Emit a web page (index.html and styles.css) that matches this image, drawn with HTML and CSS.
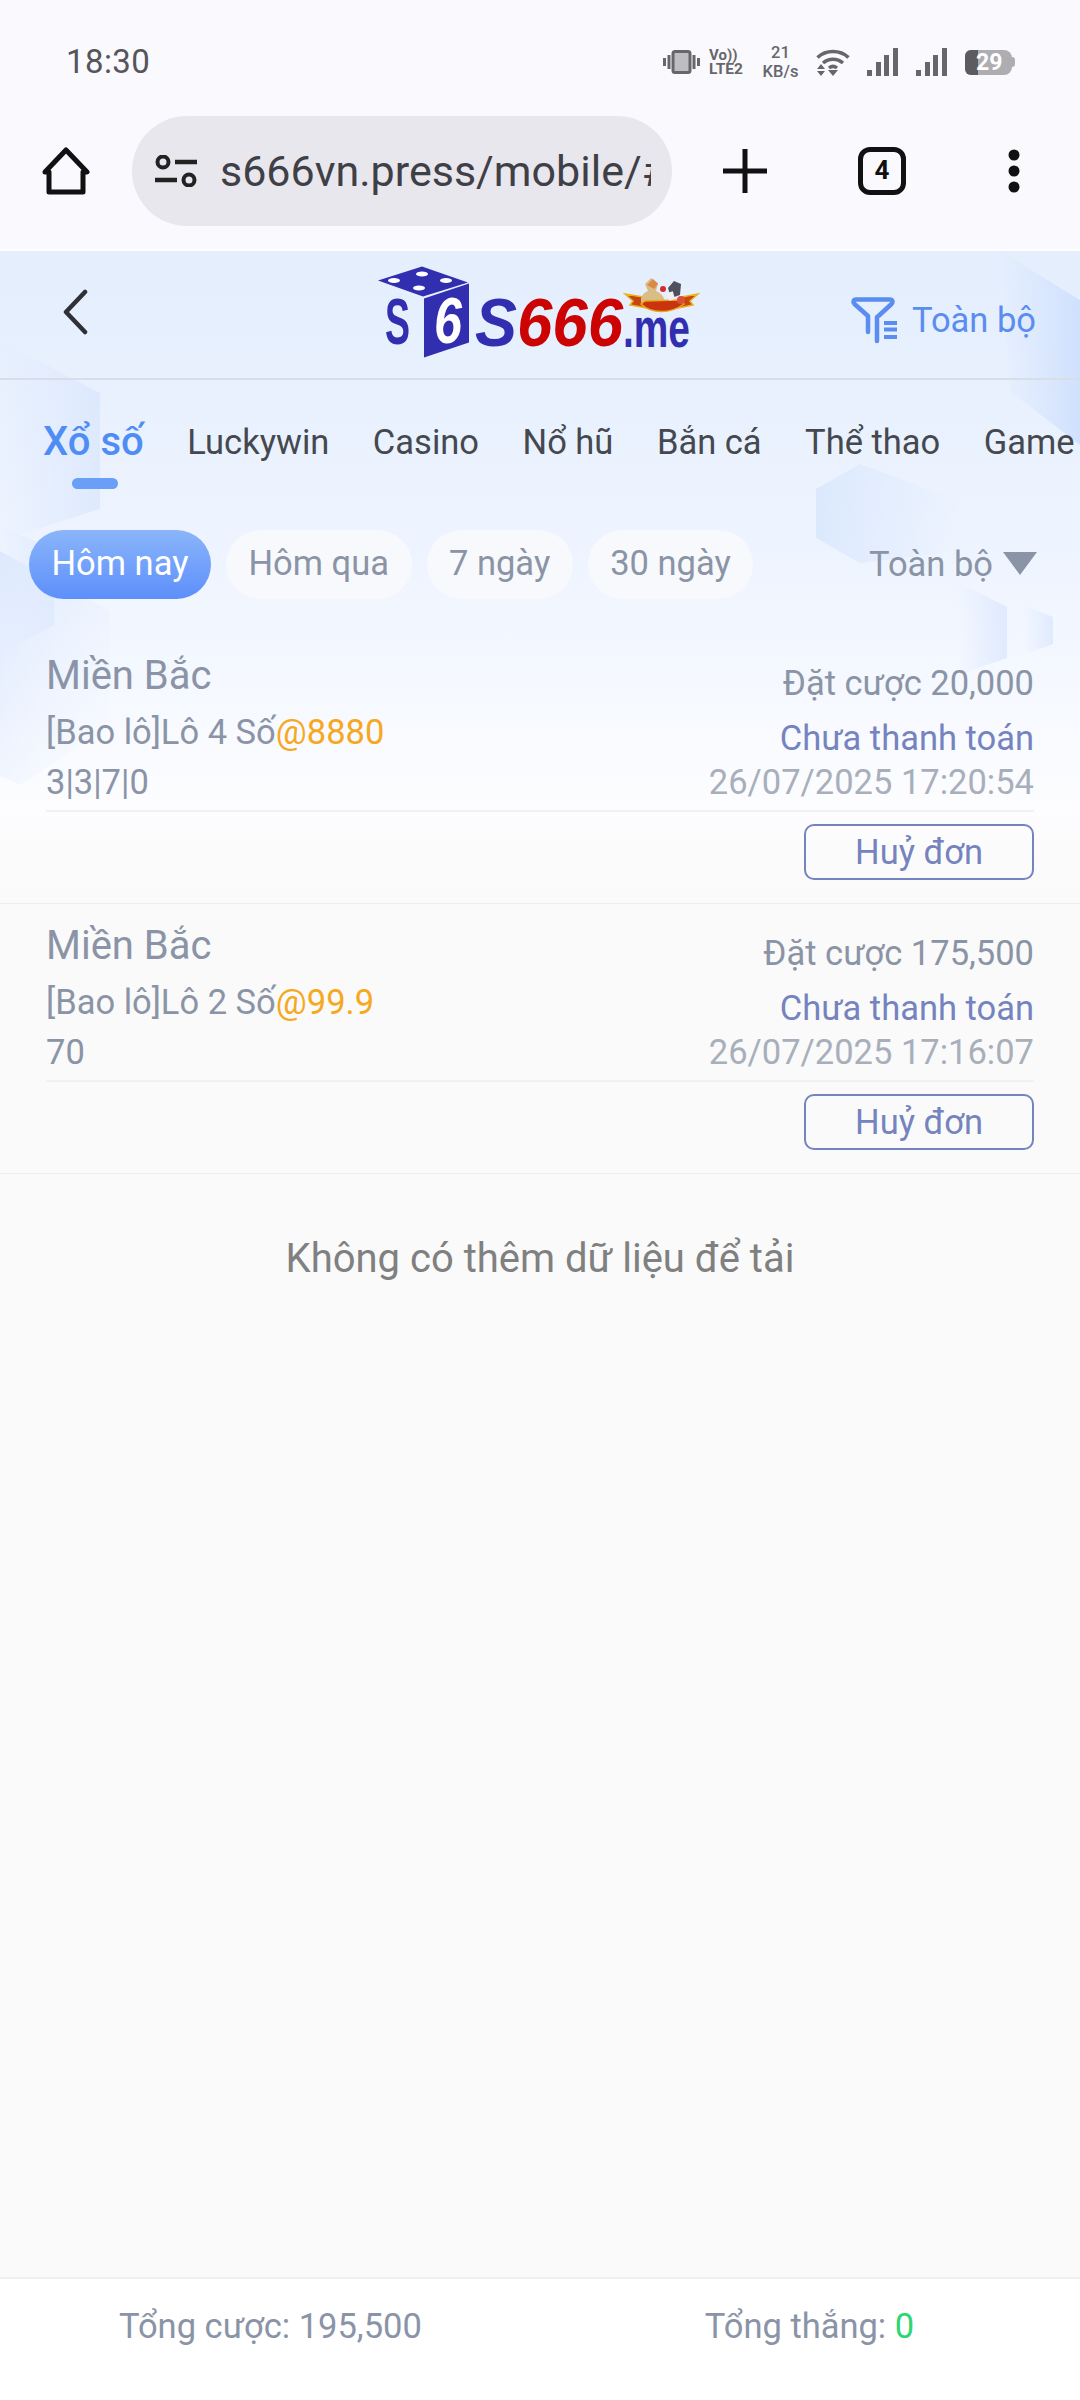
FILE: index.html
```html
<!DOCTYPE html>
<html lang="vi">
<head>
<meta charset="utf-8">
<title>S666</title>
<link rel="stylesheet" href="styles.css">
</head>
<body>
<header class="chrome">
  <div class="status">
    <span class="time">18:30</span>
    <div class="status-icons">
      <svg class="i-vib" viewBox="0 0 37 24"><rect x="10" y="1.500" width="17" height="21" rx="2" fill="#bdbdc2" stroke="#66666b" stroke-width="3"/><path d="M1.500 8v8M6 5v14M31 5v14M35.500 8v8" stroke="#66666b" stroke-width="3" fill="none"/></svg>
      <div class="volte"><span class="vo">Vo))</span><span class="lte">LTE2</span></div>
      <div class="speed"><span>21</span><span>KB/s</span></div>
      <svg class="i-wifi" viewBox="0 0 34 29"><path d="M1.500 9.500C10 1.500 24 1.500 32.500 9.500M7 15c6-5 14-5 20 0M13 20c2.500-2 5.500-2 8 0" stroke="#66666b" stroke-width="3.500" fill="none"/><path d="M1 21h8l-4-5zM1 23h8l-4 5zM17 28l-5-6h10z" fill="#66666b"/></svg>
      <svg class="i-sig" viewBox="0 0 31 28"><path d="M0 22h5v6H0zM9 14h5v14H9zM17 7h5v21h-5zM26 0h5v28h-5z" fill="#66666b"/></svg>
      <svg class="i-sig" viewBox="0 0 31 28"><path d="M0 22h5v6H0zM9 14h5v14H9zM17 7h5v21h-5zM26 0h5v28h-5z" fill="#66666b"/></svg>
      <div class="battery"><span class="batt-level"></span><span class="batt-num">29</span></div>
      <i class="batt-nub"></i>
    </div>
  </div>
  <div class="toolbar">
    <svg class="i-home" viewBox="0 0 50 48"><path d="M25 3 46 25H42V45H8V25H4Z" fill="none" stroke="#111" stroke-width="5" stroke-linejoin="round"/></svg>
    <div class="url">
      <svg class="i-tune" viewBox="0 0 42 32"><circle cx="8" cy="7" r="5.500" fill="none" stroke="#222" stroke-width="4"/><path d="M20 7H42M0 25H22" stroke="#222" stroke-width="4.500"/><circle cx="34" cy="25" r="5.500" fill="none" stroke="#222" stroke-width="4"/></svg>
      <span class="url-text">s666vn.press/mobile/#/bet</span>
    </div>
    <svg class="i-plus" viewBox="0 0 44 44"><path d="M22 0V44M0 22H44" stroke="#111" stroke-width="5"/></svg>
    <div class="tabcount">4</div>
    <svg class="i-dots" viewBox="0 0 12 44"><circle cx="6" cy="6" r="5.500" fill="#111"/><circle cx="6" cy="22" r="5.500" fill="#111"/><circle cx="6" cy="38" r="5.500" fill="#111"/></svg>
  </div>
</header>

<main class="page">
  <svg class="deco" viewBox="0 0 1080 900" preserveAspectRatio="none">
    <defs>
      <linearGradient id="hl" x1="0" x2="1" y1="0" y2="0"><stop offset="0" stop-color="#dce8fd" stop-opacity="0"/><stop offset="1" stop-color="#d9e6fd" stop-opacity=".75"/></linearGradient>
      <linearGradient id="hd" x1="0" x2="1" y1="0" y2="1"><stop offset="0" stop-color="#d9e6fd" stop-opacity=".8"/><stop offset="1" stop-color="#eef4fe" stop-opacity="0"/></linearGradient>
      <linearGradient id="hr" x1="0" x2="1" y1="0" y2="0"><stop offset="0" stop-color="#dbe8fd" stop-opacity=".95"/><stop offset="1" stop-color="#dbe8fd" stop-opacity="0"/></linearGradient>
      <linearGradient id="he" x1="0" x2="1" y1="0" y2="0"><stop offset="0" stop-color="#d0e0fd" stop-opacity="0"/><stop offset="1" stop-color="#cfe0fd" stop-opacity=".95"/></linearGradient>
    </defs>
    <path d="M0 90 100 142V258L0 290Z" fill="url(#hl)"/>
    <path d="M0 275 54 298V374L0 403Z" fill="url(#hl)"/>
    <path d="M0 300 110 360V476L20 534 0 525Z" fill="url(#hd)"/>
    <path d="M816 238 860 213 960 250V300L860 312 816 287Z" fill="url(#hr)"/>
    <path d="M1000 0 1080 49V194L1010 140Z" fill="url(#he)"/>
    <path d="M957 331 1007 356V407L957 424Z" fill="url(#hl)"/>
    <path d="M1023 354 1053 366V393L1023 404Z" fill="url(#hl)"/>
  </svg>

  <nav class="topbar">
    <svg class="i-back" viewBox="0 0 26 46"><path d="M23 3 4 23 23 43" fill="none" stroke="#2f3136" stroke-width="4.500" stroke-linecap="round" stroke-linejoin="round"/></svg>
    <svg class="logo" viewBox="0 0 330 100" role="img" aria-label="S666.me">
      <path d="M3 19.500 47 5.500 93 21.500 48 35.500Z" fill="#322eb0"/>
      <ellipse cx="47" cy="13" rx="6" ry="2.500" fill="#fff"/><ellipse cx="19" cy="19.500" rx="6" ry="2.500" fill="#fff"/><ellipse cx="71" cy="19.500" rx="6" ry="2.500" fill="#fff"/><ellipse cx="44" cy="27" rx="6" ry="2.500" fill="#fff"/>
      <path d="M49 37.500 94 22.500V81.500L49 96.500Z" fill="#322eb0"/>
      <text class="lg-s" x="10" y="83" textLength="25" lengthAdjust="spacingAndGlyphs">S</text>
      <text class="lg-six" x="59" y="82" textLength="28" lengthAdjust="spacingAndGlyphs">6</text>
      <text class="lg-big" x="100" y="85" textLength="42" lengthAdjust="spacingAndGlyphs" fill="#322eb0">S</text>
      <text class="lg-big" x="142" y="85" textLength="106" lengthAdjust="spacingAndGlyphs" fill="#cc0303">666</text>
      <text class="lg-me" x="248" y="85.500" textLength="67" lengthAdjust="spacingAndGlyphs">.me</text>
      <path d="M250 33 268 36 272 47 255 44 258 40ZM323 33 307 36 303 47 318 44 315 40Z" fill="#c6470d" stroke="#eab21f" stroke-width="1.500"/>
      <path d="M267 45C264 36 268 32 273 30L270 23 276 17 283 22 281 30C289 33 291 40 289 46Z" fill="#d9bd85"/>
      <path d="M278 18 283 23 279 28 272 24Z" fill="#d98a45"/>
      <path d="M266 43C276 53 296 53 309 43L302 39 270 40Z" fill="#c9330f" stroke="#e9a81b" stroke-width="1.500"/>
      <path d="M293 27 299 20 306 23 305 34 296 37Z" fill="#50505c"/>
      <rect x="293" y="31" width="6" height="8" fill="#f1f1f1" transform="rotate(-15 296 35)"/>
      <circle cx="288" cy="28" r="3" fill="#d72b2b"/>
      <circle cx="306" cy="39" r="4" fill="#d9503a"/>
    </svg>
    <div class="all-filter">
      <svg class="i-filter" viewBox="0 0 50 48"><path d="M19 36V20L5.500 8C3.500 6 4.500 3.500 7 3.500H41C43.500 3.500 44.500 6 42.500 8L30 19.500 28 21V45" fill="none" stroke="#5b8cf0" stroke-width="4.500" stroke-linecap="round" stroke-linejoin="round"/><path d="M35 27H48M35 33.500H48M35 41H48" stroke="#5b8cf0" stroke-width="4"/></svg>
      <span>Toàn bộ</span>
    </div>
  </nav>

  <div class="tabs">
    <div class="tab tab-on">Xổ số<i class="tab-bar"></i></div>
    <div class="tab">Luckywin</div>
    <div class="tab">Casino</div>
    <div class="tab">Nổ hũ</div>
    <div class="tab">Bắn cá</div>
    <div class="tab">Thể thao</div>
    <div class="tab">Game</div>
  </div>

  <div class="filters">
    <span class="pill pill-on">Hôm nay</span>
    <span class="pill">Hôm qua</span>
    <span class="pill">7 ngày</span>
    <span class="pill">30 ngày</span>
    <div class="dropdown">Toàn bộ<i class="tri"></i></div>
  </div>

  <section class="order">
    <div class="order-main">
      <div class="col-l">
        <div class="o-title">Miền Bắc</div>
        <div class="o-line">[Bao lô]Lô 4 Số<span class="odds">@8880</span></div>
        <div class="o-line">3|3|7|0</div>
      </div>
      <div class="col-r">
        <div class="o-bet">Đặt cược 20,000</div>
        <div class="o-state">Chưa thanh toán</div>
        <div class="o-date">26/07/2025 17:20:54</div>
      </div>
    </div>
    <div class="o-actions"><button class="cancel">Huỷ đơn</button></div>
  </section>

  <section class="order">
    <div class="order-main">
      <div class="col-l">
        <div class="o-title">Miền Bắc</div>
        <div class="o-line">[Bao lô]Lô 2 Số<span class="odds">@99.9</span></div>
        <div class="o-line">70</div>
      </div>
      <div class="col-r">
        <div class="o-bet">Đặt cược 175,500</div>
        <div class="o-state">Chưa thanh toán</div>
        <div class="o-date">26/07/2025 17:16:07</div>
      </div>
    </div>
    <div class="o-actions"><button class="cancel">Huỷ đơn</button></div>
  </section>

  <p class="nomore">Không có thêm dữ liệu để tải</p>

  <footer class="totals">
    <span class="t-bet">Tổng cược: 195,500</span>
    <span class="t-win">Tổng thắng: <b class="zero">0</b></span>
  </footer>
</main>
</body>
</html>
```
FILE: styles.css
```css
* { box-sizing: border-box; }
html, body { margin: 0; padding: 0; }
body { width: 1080px; height: 2400px; font-family: Roboto, "Noto Sans", sans-serif; background: #fafafa; overflow: hidden; }

.chrome { height: 251px; background: #f9f9fe; border-bottom: 2px solid #fff; }
.status { height: 116px; display: flex; align-items: flex-start; justify-content: space-between; padding: 44px 65px 0 66px; }
.time { font-size: 33px; line-height: 36px; color: #55555a; letter-spacing: .4px; }
.status-icons { display: flex; align-items: center; height: 36px; position: relative; }
.i-vib { width: 37px; height: 24px; margin-right: 9px; flex: none; }
.volte { width: 37px; display: flex; flex-direction: column; color: #66666b; font-weight: 700; margin-right: 14px; }
.vo { font-size: 15px; line-height: 14px; }
.lte { font-size: 15.500px; line-height: 14px; }
.speed { width: 41px; display: flex; flex-direction: column; align-items: center; color: #66666b; font-size: 16.500px; line-height: 19px; font-weight: 500; margin-right: 15px; white-space: nowrap; }
.i-wifi { width: 34px; height: 29px; margin-right: 17px; flex: none; }
.i-sig { width: 31px; height: 28px; margin-right: 18px; flex: none; }
.battery { width: 47px; height: 25px; border-radius: 6px 8px 8px 6px; background: #aeaeb2; position: relative; overflow: hidden; }
.batt-nub { width: 3px; height: 10px; background: #aeaeb2; border-radius: 0 3px 3px 0; }
.batt-level { position: absolute; left: 0; top: 0; bottom: 0; width: 13px; background: #5c5c60; }
.batt-num { position: absolute; left: 11px; top: 0; line-height: 25px; font-size: 23px; font-weight: 700; color: #fff; }

.toolbar { height: 110px; display: flex; align-items: center; position: relative; padding-left: 41px; }
.i-home { width: 50px; height: 48px; margin-right: 41px; flex: none; }
.url { width: 540px; height: 110px; border-radius: 55px; background: #e8e7ee; display: flex; align-items: center; padding-left: 23px; flex: none; margin-right: 51px; }
.i-tune { width: 42px; height: 32px; flex: none; margin-right: 23px; }
.url-text { width: 431px; overflow: hidden; white-space: nowrap; font-size: 43px; color: #3f4046; }
.i-plus { width: 44px; height: 44px; flex: none; margin-right: 91px; }
.tabcount { width: 48px; height: 48px; flex: none; border: 5px solid #111; border-radius: 12px; text-align: center; font-size: 26px; line-height: 37px; font-weight: 700; color: #111; margin-right: 102px; }
.i-dots { width: 12px; height: 44px; flex: none; }

.page { position: relative; height: 2149px; display: flex; flex-direction: column; overflow: hidden; background: linear-gradient(180deg, #e4eefd 0, #eef4ff 300px, #f6f9ff 450px, #fdfdff 560px, #fafafa 640px); }
.deco { position: absolute; left: 0; top: 0; width: 1080px; height: 900px; pointer-events: none; }

.topbar { position: relative; height: 129px; flex: none; display: grid; grid-template-columns: 1fr 330px 1fr; align-items: center; border-bottom: 2px solid #d8dde6; }
.i-back { width: 26px; height: 46px; margin-left: 62px; margin-top: -6px; }
.logo { width: 330px; height: 100px; margin-top: -8px; overflow: visible; }
.logo text { font-family: "Liberation Sans", sans-serif; font-weight: 700; }
.lg-s { font-size: 64px; fill: #322eb0; }
.lg-six { font-size: 64px; fill: #fff; font-style: italic; }
.lg-big { font-size: 68px; font-style: italic; }
.lg-me { font-size: 55px; fill: #322eb0; }
.all-filter { display: flex; align-items: center; justify-content: flex-end; padding: 10px 44px 0 0; color: #5b8cf0; font-size: 34.500px; }
.i-filter { width: 50px; height: 48px; margin-right: 13px; }

.tabs { position: relative; height: 130px; flex: none; display: flex; gap: 43.500px; padding: 37px 0 0 43px; overflow: hidden; white-space: nowrap; }
.tab { position: relative; font-size: 34.500px; line-height: 50px; color: #45484f; flex: none; }
.tab-on { font-size: 40px; font-weight: 500; color: #4f8df5; }
.tab-bar { position: absolute; left: 29px; top: 61px; width: 46px; height: 11px; border-radius: 6px; background: #6b9ff7; }

.filters { position: relative; height: 69px; flex: none; margin-top: 20px; display: flex; gap: 15px; padding-left: 29px; padding-right: 43px; }
.pill { height: 69px; padding: 0 22.500px; border-radius: 35px; background: #f8f9fc; color: #8a94a6; font-size: 34.500px; line-height: 67px; white-space: nowrap; }
.pill-on { color: #fff; background: linear-gradient(180deg, #8ab5fa, #5d8ffb); }
.dropdown { margin-left: auto; display: flex; align-items: center; gap: 10px; color: #8a94a6; font-size: 34.500px; height: 67px; }
.tri { width: 0; height: 0; border-left: 17px solid transparent; border-right: 17px solid transparent; border-top: 23px solid #8a94a6; }

.order { position: relative; height: 270px; flex: none; padding: 0 46px; border-bottom: 1px solid #eeeeef; }
.filters + .order { margin-top: 35px; }
.order-main { height: 178px; display: flex; justify-content: space-between; border-bottom: 2px solid #f0f1f3; }
.col-l { padding-top: 18px; }
.o-title { font-size: 40px; line-height: 48px; color: #8a94a6; }
.o-line { font-size: 34.500px; line-height: 50px; color: #8a94a6; }
.o-title + .o-line { margin-top: 7px; }
.odds { color: #f6a821; }
.col-r { padding-top: 25px; text-align: right; font-size: 34.500px; }
.o-bet { line-height: 48px; color: #8a94a6; }
.o-state { line-height: 48px; margin-top: 7px; color: #7583bf; }
.o-date { line-height: 40px; color: #a8afbb; }
.o-actions { display: flex; justify-content: flex-end; padding-top: 12px; }
.cancel { width: 230px; height: 56px; padding: 0; border: 2px solid #7583bf; border-radius: 10px; background: transparent; font-family: inherit; font-size: 34.500px; line-height: 50px; color: #7583bf; }

.nomore { position: relative; margin: 58px 0 0; text-align: center; font-size: 40px; line-height: 54px; color: #808080; }

.totals { position: absolute; left: 0; right: 0; bottom: 0; height: 123px; background: #fff; border-top: 2px solid #efefef; display: flex; padding-top: 25px; font-size: 34.500px; line-height: 44px; color: #8a94a6; }
.t-bet { margin-left: 119px; }
.t-win { margin-left: 283px; }
.zero { font-weight: 400; color: #2ed573; }
```
